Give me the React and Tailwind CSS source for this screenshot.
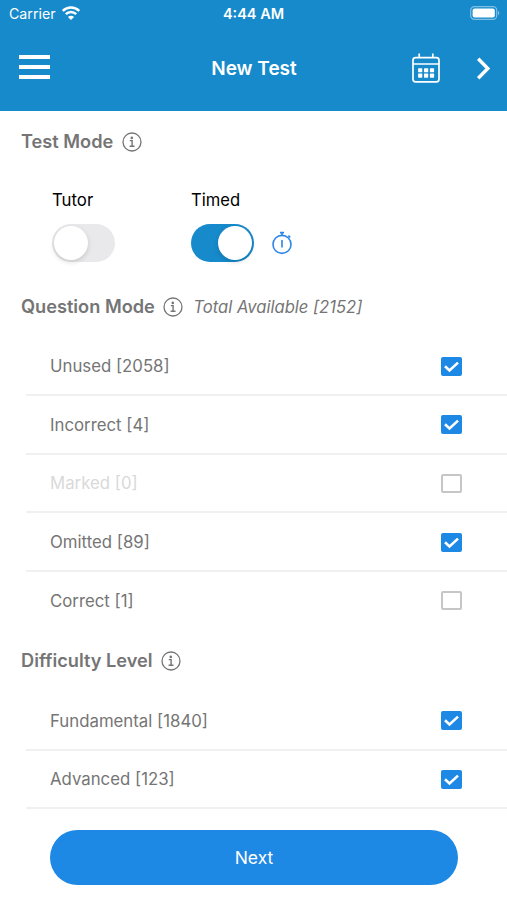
import React, { useState } from 'react';

const questionModes = [
  { label: 'Unused', count: 2058, checked: true },
  { label: 'Incorrect', count: 4, checked: true },
  { label: 'Marked', count: 0, checked: false },
  { label: 'Omitted', count: 89, checked: true },
  { label: 'Correct', count: 1, checked: false },
];

const difficultyLevels = [
  { label: 'Fundamental', count: 1840, checked: true },
  { label: 'Advanced', count: 123, checked: true },
];

const App = () => {
  const [tutor, setTutor] = useState(false);
  const [timed, setTimed] = useState(true);

  return (
    <div className="w-full h-[900px] bg-white overflow-hidden flex flex-col font-['Inter',sans-serif] text-[#757575]">
      <header className="h-[110.5px] shrink-0 bg-[#168acb] text-white">
        <StatusBar />
        <div className="h-[78px] grid grid-cols-[1fr_auto_1fr] items-center pl-[19px] pr-4">
          <button aria-label="Menu" className="w-[31px] flex flex-col gap-[6px]">
            <span className="h-[4px] bg-white" />
            <span className="h-[4px] bg-white" />
            <span className="h-[4px] bg-white" />
          </button>
          <h1 className="text-[19px] leading-6 font-semibold pt-[3px] pr-[2px]">New Test</h1>
          <div className="flex items-center justify-end gap-[36px] pt-[2px]">
            <CalendarIcon />
            <svg width="15" height="23" viewBox="0 0 15 23" fill="none" stroke="currentColor" strokeWidth="3.4">
              <path d="M2.2 1.8 L11.8 11.5 L2.2 21.2" />
            </svg>
          </div>
        </div>
      </header>

      <SectionTitle title="Test Mode" className="h-[62px]" />
      <div className="h-[103px] shrink-0 flex pl-[52px] pt-[15px] text-black">
        <div className="w-[139px]">
          <p className="text-[16.8px] leading-6 mb-[12.5px]">Tutor</p>
          <Toggle on={tutor} onClick={() => setTutor(!tutor)} />
        </div>
        <div>
          <p className="text-[16.6px] leading-6 mb-[12.5px]">Timed</p>
          <div className="flex items-center gap-[17px]">
            <Toggle on={timed} onClick={() => setTimed(!timed)} />
            <StopwatchIcon />
          </div>
        </div>
      </div>

      <SectionTitle title="Question Mode" className="h-[62px]">
        <span className="ml-[10px] mt-px text-[16.6px] italic">Total Available [2152]</span>
      </SectionTitle>
      <OptionList items={questionModes} />

      <SectionTitle title="Difficulty Level" className="h-[61.5px] pb-px" />
      <OptionList items={difficultyLevels} lastBorder />

      <button className="mt-[21px] ml-[50px] w-[408px] h-[55px] shrink-0 rounded-full bg-[#1e88e5] text-white text-[17.5px]">
        Next
      </button>
    </div>
  );
};

const StatusBar = () => (
  <div className="h-[28px] grid grid-cols-[1fr_auto_1fr] items-center pl-[9px] pr-[7px] text-[14px]">
    <div className="flex items-center gap-[6px]">
      <span className="text-[14.2px]">Carrier</span>
      <svg className="-mt-[2px]" width="18" height="14" viewBox="0 0 18 14" fill="none" stroke="currentColor" strokeWidth="2.4">
        <path d="M0.8 5 C5.4 0.4 12.6 0.4 17.2 5" />
        <path d="M3.8 8.2 C6.8 5.2 11.2 5.2 14.2 8.2" />
        <path d="M9 14 L5.9 10.9 C7.6 9.2 10.4 9.2 12.1 10.9 Z" fill="currentColor" stroke="none" />
      </svg>
    </div>
    <span className="font-semibold text-[14.5px] pr-[2px]">4:44 AM</span>
    <svg className="justify-self-end -mt-[2px]" width="30" height="14" viewBox="0 0 30 14">
      <rect x="0.7" y="0.7" width="26" height="12.6" rx="3.6" fill="none" stroke="#fff" strokeOpacity="0.45" strokeWidth="1.2" />
      <rect x="2.6" y="2.5" width="22.2" height="9" rx="2" fill="#fff" />
      <path d="M28 4.8 C29.8 5.6 29.8 8.4 28 9.2 Z" fill="#fff" fillOpacity="0.45" />
    </svg>
  </div>
);

const SectionTitle = ({ title, className, children }) => (
  <div className={`${className} shrink-0 flex items-center pl-[21px]`}>
    <h2 className="text-[18.2px] font-semibold">{title}</h2>
    <svg className="ml-[8.5px]" width="20" height="20" viewBox="0 0 20 20" fill="none" stroke="currentColor">
      <circle cx="10" cy="10" r="9" strokeWidth="1.3" />
      <circle cx="9.8" cy="5.9" r="1.3" fill="currentColor" stroke="none" />
      <path d="M7.8 8.6 H10.1 V14.3 M7.6 14.3 H12.5" strokeWidth="1.4" />
    </svg>
    {children}
  </div>
);

const Toggle = ({ on, onClick }) => (
  <button
    role="switch"
    aria-checked={on}
    onClick={onClick}
    className={`w-[62.5px] h-[38px] rounded-full p-[2px] flex items-center ${on ? 'bg-[#168acb] justify-end' : 'bg-[#e9e9eb] justify-start'}`}
  >
    <span className="size-[34px] rounded-full bg-white shadow-[0_2px_5px_rgba(0,0,0,0.15)]" />
  </button>
);

const OptionList = ({ items, lastBorder }) => (
  <ul className="shrink-0 pl-[26px]">
    {items.map((item, i) => (
      <li
        key={item.label}
        className={`h-[58.6px] flex items-center justify-between pl-6 pr-[45.5px] pt-[2px] text-[16.8px] border-b-2 ${
          i < items.length - 1 || lastBorder ? 'border-[#f0f0f1]' : 'border-transparent'
        } ${item.count === 0 ? 'text-[#d9d9d9]' : ''}`}
      >
        <span>{item.label} [{item.count}]</span>
        <Checkbox initial={item.checked} />
      </li>
    ))}
  </ul>
);

const Checkbox = ({ initial }) => {
  const [checked, setChecked] = useState(initial);
  return (
    <button
      role="checkbox"
      aria-checked={checked}
      onClick={() => setChecked(!checked)}
      className={`w-[21px] h-[19px] -mt-px rounded-[2px] ${checked ? 'bg-[#1e88e5]' : 'border-2 border-[#c6c6c6]'}`}
    >
      {checked && (
        <svg width="21" height="19" viewBox="0 0 21 19" fill="none" stroke="#fff" strokeWidth="2.6">
          <path d="M4 9.3 L8.5 13.4 L17 5.6" />
        </svg>
      )}
    </button>
  );
};

const CalendarIcon = () => (
  <svg width="28" height="30" viewBox="0 0 28 30" fill="none" stroke="currentColor" strokeWidth="1.7">
    <rect x="1" y="4.6" width="26" height="24.2" rx="2.6" />
    <path d="M1 11 H27 M7.2 0.6 V4.6 M20.8 0.6 V4.6" />
    <g fill="currentColor" stroke="none">
      {[15.2, 20.6].map(y => [6.1, 12, 17.9].map(x => (
        <rect key={`${x}-${y}`} x={x} y={y} width="4.2" height="4.1" rx="0.6" />
      )))}
    </g>
  </svg>
);

const StopwatchIcon = () => (
  <svg width="22" height="24" viewBox="0 0 22 24" fill="none" stroke="#2a86ea" strokeWidth="1.6">
    <circle cx="11" cy="13.4" r="9" />
    <path d="M11 9 V16.4 M11 1.6 V4.4 M9 1.6 H13 M17.4 4.6 L19.2 6.4" />
  </svg>
);

export default App;
